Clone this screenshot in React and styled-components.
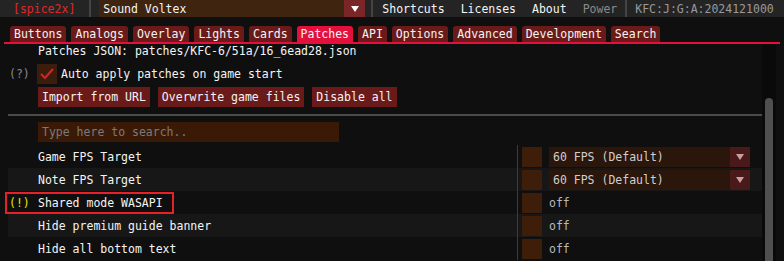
import React from 'react'
import styled, { createGlobalStyle } from 'styled-components'

const GlobalStyle = createGlobalStyle`
  html, body {
    margin: 0;
    padding: 0;
    background: #0f0f0f;
    overflow: hidden;
  }
  body {
    font-family: "DejaVu Sans Mono", "Liberation Mono", monospace;
    font-size: 11.5px;
    color: #f4f4f4;
  }
`

const Page = styled.div`
  width: 784px;
  height: 261px;
  background: #0f0f0f;
  display: flex;
  flex-direction: column;
  overflow: hidden;
`

const MenuBar = styled.div`
  height: 17px;
  background: #242424;
  display: flex;
  align-items: center;
  padding-left: 13px;
  white-space: nowrap;
`

const Brand = styled.span`
  color: #e02828;
  margin-right: 14px;
`

const VSep = styled.div`
  width: 2px;
  height: 17px;
  background: #444444;
  margin: 0 ${p => (p.$right ?? 8)}px 0 0;
`

const Combo = styled.div`
  width: 266px;
  height: 17px;
  background: #3f2410;
  display: flex;
  align-items: center;
  margin-right: 6px;
`

const ComboText = styled.span`
  flex: 1;
  padding-left: 4px;
`

const ArrowBox = styled.div`
  width: ${p => p.$w || 21}px;
  height: 100%;
  background: ${p => p.$bg || '#7a2626'};
  display: flex;
  align-items: center;
  justify-content: center;
`

const MenuItem = styled.span`
  padding: 0 8px;
  color: ${p => (p.$dim ? '#8a8a8a' : '#f4f4f4')};
`

const Version = styled.span`
  color: #9a9a9a;
`

const TabBar = styled.div`
  margin: 9px 4px 0 4px;
  padding-left: 6px;
  display: flex;
  gap: 5px;
  border-bottom: 2px solid #e3103c;
`

const Tab = styled.div`
  height: 16px;
  line-height: 16px;
  padding: 0 4px;
  border-radius: 3px 3px 0 0;
  background: ${p => (p.$active ? '#e3103c' : '#6b1a1a')};
  white-space: nowrap;
`

const Body = styled.div`
  flex: 1;
  display: flex;
  overflow: hidden;
`

const Main = styled.div`
  flex: 1;
  padding-left: 8px;
  display: flex;
  flex-direction: column;
`

const PathLine = styled.div`
  height: 14px;
  line-height: 14px;
  padding-left: 30px;
  white-space: nowrap;
`

const CheckRow = styled.div`
  margin-top: 6px;
  height: 20px;
  display: flex;
  align-items: center;
`

const Hint = styled.span`
  width: 29px;
  padding-left: 1px;
  box-sizing: border-box;
  color: #8a8a8a;
`

const CheckBox = styled.div`
  width: 20px;
  height: 20px;
  background: #3b1d0d;
  display: flex;
  align-items: center;
  justify-content: center;
  margin-right: 4px;
`

const ButtonRow = styled.div`
  margin-top: 3px;
  padding-left: 30px;
  display: flex;
  gap: 8px;
`

const Button = styled.div`
  height: 20px;
  line-height: 20px;
  padding: 0 4px;
  background: #6b1a1a;
  white-space: nowrap;
`

const Separator = styled.div`
  margin-top: 7px;
  height: 2px;
  background: #4b4b4b;
`

const Search = styled.div`
  margin: 6px 0 0 30px;
  width: 301px;
  height: 20px;
  line-height: 20px;
  padding-left: 4px;
  box-sizing: border-box;
  background: #3a1a06;
  color: #7a7a7a;
`

const Table = styled.div`
  margin-top: 3px;
  display: flex;
  flex-direction: column;
`

const Row = styled.div`
  height: 23px;
  display: grid;
  grid-template-columns: 509px 1fr;
  background: ${p => (p.$alt ? '#171717' : 'transparent')};
`

const LabelCell = styled.div`
  display: flex;
  align-items: center;
  padding-left: ${p => (p.$boxed ? 0 : 30)}px;
  white-space: nowrap;
`

const WarnBox = styled.div`
  margin-left: -3px;
  height: 22px;
  border: 2px solid #e8202a;
  box-sizing: border-box;
  display: flex;
  align-items: center;
  padding: 0 9px 0 2px;
`

const WarnMark = styled.span`
  color: #e6e600;
  width: 29px;
`

const ValueCell = styled.div`
  border-left: 1px solid #3c3c3c;
  display: flex;
  align-items: flex-start;
  padding: 2px 0 0 4px;
`

const Swatch = styled.div`
  width: 20px;
  height: 20px;
  background: #3e1e08;
  margin-right: 7px;
`

const ValueCombo = styled.div`
  width: 201px;
  height: 20px;
  background: #2a160a;
  display: flex;
  align-items: center;
  color: #cfcfcf;
`

const ValueText = styled.span`
  line-height: 20px;
  color: #b8b8b8;
`

const ScrollTrack = styled.div`
  width: 14px;
  margin-right: 8px;
  background: #0a0a0a;
  display: flex;
  justify-content: center;
  padding-top: 54px;
  box-sizing: border-box;
`

const ScrollGrab = styled.div`
  width: 8px;
  height: 200px;
  background: #4f4f4f;
  border-radius: 4px 4px 0 0;
`

const Arrow = ({ color }) => (
  <svg width="8" height="6" viewBox="0 0 8 6">
    <polygon points="0,0 8,0 4,6" fill={color} />
  </svg>
)

const tabs = ['Buttons', 'Analogs', 'Overlay', 'Lights', 'Cards', 'Patches', 'API', 'Options', 'Advanced', 'Development', 'Search']

const patches = [
  { name: 'Game FPS Target', combo: '60 FPS (Default)' },
  { name: 'Note FPS Target', combo: '60 FPS (Default)' },
  { name: 'Shared mode WASAPI', value: 'off', warn: true },
  { name: 'Hide premium guide banner', value: 'off' },
  { name: 'Hide all bottom text', value: 'off' },
]

export default function App() {
  return (
    <Page>
      <GlobalStyle />
      <MenuBar>
        <Brand>[spice2x]</Brand>
        <VSep />
        <Combo>
          <ComboText>Sound Voltex</ComboText>
          <ArrowBox><Arrow color="#ffffff" /></ArrowBox>
        </Combo>
        <VSep $right={1} />
        <MenuItem>Shortcuts</MenuItem>
        <MenuItem>Licenses</MenuItem>
        <MenuItem>About</MenuItem>
        <MenuItem $dim>Power</MenuItem>
        <VSep />
        <Version>KFC:J:G:A:2024121000</Version>
      </MenuBar>

      <TabBar>
        {tabs.map(t => (
          <Tab key={t} $active={t === 'Patches'}>{t}</Tab>
        ))}
      </TabBar>

      <Body>
        <Main>
          <PathLine>Patches JSON: patches/KFC-6/51a/16_6ead28.json</PathLine>
          <CheckRow>
            <Hint>(?)</Hint>
            <CheckBox>
              <svg width="14" height="12" viewBox="0 0 14 12">
                <polyline points="1,6 5,10 13,1" fill="none" stroke="#c82828" strokeWidth="2.2" />
              </svg>
            </CheckBox>
            <span>Auto apply patches on game start</span>
          </CheckRow>
          <ButtonRow>
            <Button>Import from URL</Button>
            <Button>Overwrite game files</Button>
            <Button>Disable all</Button>
          </ButtonRow>
          <Separator />
          <Search>Type here to search..</Search>
          <Table>
            {patches.map((p, i) => (
              <Row key={p.name} $alt={i % 2 === 1}>
                <LabelCell $boxed={p.warn}>
                  {p.warn ? (
                    <WarnBox>
                      <WarnMark>(!)</WarnMark>
                      {p.name}
                    </WarnBox>
                  ) : p.name}
                </LabelCell>
                <ValueCell>
                  <Swatch />
                  {p.combo ? (
                    <ValueCombo>
                      <ComboText>{p.combo}</ComboText>
                      <ArrowBox $w={20} $bg="#4a1a1a"><Arrow color="#c8a0a0" /></ArrowBox>
                    </ValueCombo>
                  ) : (
                    <ValueText>{p.value}</ValueText>
                  )}
                </ValueCell>
              </Row>
            ))}
          </Table>
        </Main>
        <ScrollTrack>
          <ScrollGrab />
        </ScrollTrack>
      </Body>
    </Page>
  )
}
